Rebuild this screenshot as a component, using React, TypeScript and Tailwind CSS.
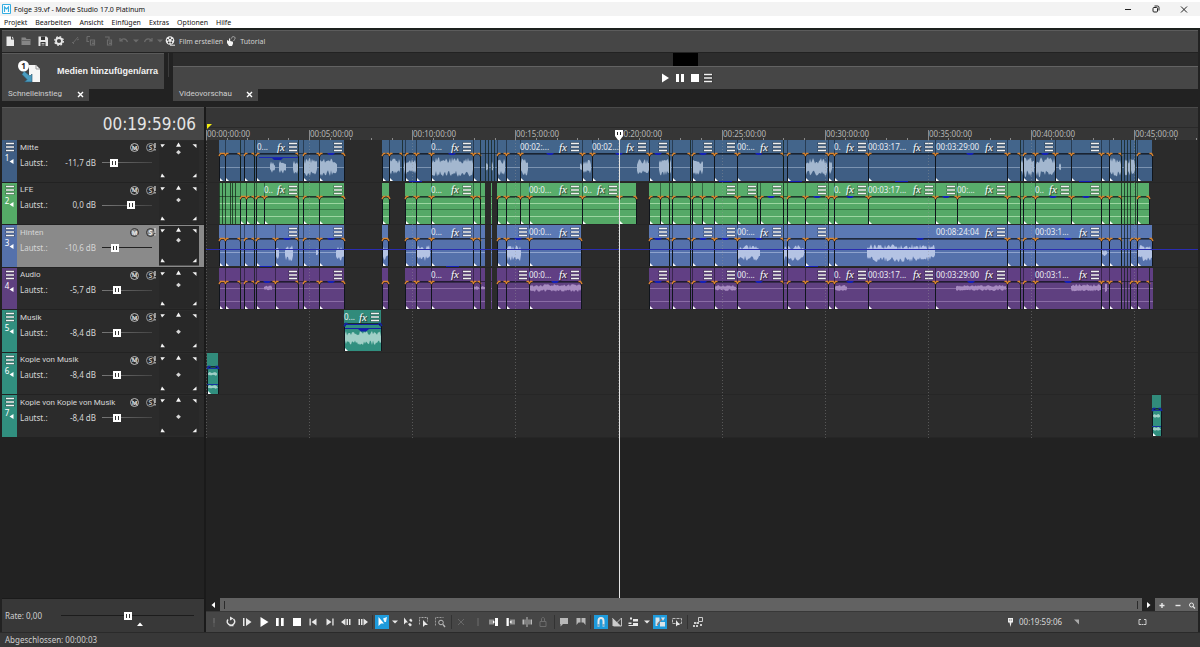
import React from "react";

/* Canvas x positions are counted from the window's left edge; lanes begin here. */
const ORIGIN = 206;
const FIVE_MINUTES = 103.1;

type Label = { t?: string; x?: number; fx?: number; m: number };
type Wave = [from: number, to: number, amp: number];
type Track = {
  name: string;
  vol: string;
  pos: number;
  pan: number;
  head: string;
  body: string;
  wave: string;
  strip: string;
  selected?: boolean;
  clips: number[][];
  labels: Label[];
  waves: Wave[];
  centre: number;
  lines: number[];
  top: number[];
  bottom: number[];
};

const m = (v: number): Label => ({ m: v });
const l = (t: string, x: number, fx: number, mm: number): Label => ({ t, x, fx, m: mm });

const tracks: Track[] = [
  {
    name: "Mitte", vol: "-11,7 dB", pos: 20, pan: 12,
    head: "#43658b", body: "#3f5e84", wave: "#a3b7cf", strip: "bg-[#3f5e84]",
    clips: [
      [219, 225, 240, 244, 254, 256, 298, 303, 319, 344],
      [382, 389, 402, 405, 416, 431, 473, 480, 485, 488, 491, 494, 497, 506, 520, 582, 592, 649, 669, 672, 690, 692, 714, 737, 783, 787, 805, 828, 834, 868, 935, 1007, 1020, 1023, 1035, 1055, 1071, 1101, 1109, 1121, 1124, 1127, 1130, 1135, 1137, 1152],
    ],
    labels: [
      l("0...", 257, 281, 293), m(338), l("0...", 431, 455, 467), l("00:02:...", 520, 563, 575), l("00:02...", 592, 630, 642),
      m(663), m(708), m(731), l("00:...", 737, 764, 777), m(822), l("0.", 834, 850, 862), l("00:03:17...", 868, 917, 929),
      l("00:03:29:00", 936, 989, 1001), m(1049), m(1095),
    ],
    waves: [[270, 275, 6], [279, 286, 7], [293, 298, 7], [303, 317, 9], [319, 337, 9], [389, 400, 9], [404, 416, 8], [431, 473, 10], [486, 488, 6], [491, 493, 6], [497, 505, 9], [520, 528, 9], [580, 582, 5], [583, 591, 8], [637, 649, 8], [659, 671, 9], [692, 703, 8], [805, 827, 9], [828, 832, 7], [1020, 1034, 10], [1036, 1055, 10], [1059, 1061, 6], [1109, 1121, 10], [1124, 1135, 9]],
    centre: 27, lines: [27], top: [331, 452, 550, 619, 658, 703, 759, 970, 1045], bottom: [415, 725, 795, 901, 1085],
  },
  {
    name: "LFE", vol: "0,0 dB", pos: 60, pan: 17,
    head: "#58ad6b", body: "#55a967", wave: "#9bd6a0", strip: "bg-[#55ab67]",
    clips: [
      [219, 222, 225, 230, 232, 235, 240, 246, 254, 256, 264, 298, 303, 319, 344], [382, 389],
      [405, 416, 431, 473, 480, 485], [491, 492], [497, 506, 520, 529, 582, 619, 636],
      [649, 660, 669, 672, 690, 692, 702, 714, 737, 757, 760, 783, 787, 805, 828, 834, 868, 935, 957, 1007, 1020, 1023, 1035, 1071, 1101, 1109, 1121, 1124, 1127, 1130, 1135, 1137, 1149],
    ],
    labels: [
      l("0..", 264, 281, 293), m(338), l("0...", 431, 455, 467), l("00:0...", 529, 563, 575), l("0..", 583, 601, 613), m(731), m(752), m(777), m(822),
      l("0.", 834, 850, 862), l("00:03:17...", 868, 917, 929), m(951), l("00:...", 957, 989, 1001), l("0..", 1035, 1053, 1065), m(1095),
    ],
    waves: [], centre: 20, lines: [20, 33], top: [771, 817, 850, 946, 1053, 1086], bottom: [281, 452, 600, 725],
  },
  {
    name: "Hinten", vol: "-10,6 dB", pos: 22, pan: 15,
    head: "#5b79b5", body: "#5571ab", wave: "#b4c3e4", strip: "bg-[#5571ab]", selected: true,
    clips: [
      [219, 225, 240, 244, 254, 256, 275, 298, 303, 319, 344], [382, 388], [405, 416, 431, 473, 480, 485], [491, 492], [497, 506, 529, 581],
      [649, 669, 672, 690, 692, 714, 737, 783, 787, 805, 828, 834, 1007, 1020, 1023, 1035, 1101, 1109, 1121, 1124, 1127, 1130, 1137, 1152],
    ],
    labels: [
      m(293), m(338), l("0...", 431, 455, 467), m(523), l("00:0...", 529, 563, 575), m(663), m(708), m(731), l("00:...", 737, 764, 777), m(822),
      l("00:08:24:04", 936, 989, 1001), l("00:03:1...", 1035, 1083, 1095),
    ],
    waves: [[275, 279, 6], [285, 293, 8], [316, 318, 5], [336, 344, 8], [382, 388, 7], [417, 430, 8], [507, 521, 8], [737, 760, 8], [783, 804, 8], [867, 935, 9], [1101, 1107, 3], [1138, 1152, 8]],
    centre: 28, lines: [27], top: [287, 331, 518, 658, 703, 725, 759, 920, 1068], bottom: [265, 452, 811],
  },
  {
    name: "Audio", vol: "-5,7 dB", pos: 27, pan: 17,
    head: "#613f84", body: "#5f4080", wave: "#a78bc0", strip: "bg-[#5f4080]",
    clips: [
      [219, 225, 240, 244, 254, 256, 275, 298, 303, 319, 344], [382, 388], [405, 416, 431, 473, 480, 485], [491, 492], [497, 506, 529, 581],
      [649, 669, 672, 690, 692, 714, 737, 783, 787, 805, 828, 834, 868, 935, 1007, 1020, 1023, 1035, 1101, 1109, 1121, 1124, 1127, 1130, 1137, 1149, 1153],
    ],
    labels: [
      m(293), m(338), l("0...", 431, 455, 467), m(523), l("00:0...", 529, 563, 575), m(663), m(708), m(731), l("00:...", 737, 764, 777), m(822),
      l("0.", 834, 850, 862), l("00:03:17...", 868, 917, 929), l("00:03:29:00", 936, 989, 1001), l("00:03:1...", 1035, 1083, 1095),
    ],
    waves: [[264, 272, 3], [473, 479, 2], [481, 485, 2], [529, 581, 4], [714, 736, 3], [835, 847, 3], [956, 1006, 3], [1071, 1101, 4], [1105, 1107, 7]],
    centre: 20, lines: [20, 33], top: [267, 331, 555, 658, 703, 759, 850, 971, 1068], bottom: [287, 452, 518, 795, 817, 901, 1014],
  },
  {
    name: "Musik", vol: "-8,4 dB", pos: 25, pan: 22,
    head: "#318b7b", body: "#318f7f", wave: "#a0cfc6", strip: "bg-[#318f7f]",
    clips: [[344, 381]], labels: [l("0...", 344, 363, 375)], waves: [[345, 381, 7]],
    centre: 28, lines: [], top: [], bottom: [],
  },
  {
    name: "Kopie von Musik", vol: "-8,4 dB", pos: 25, pan: 22,
    head: "#318b7b", body: "#318f7f", wave: "#a0cfc6", strip: "bg-[#318f7f]",
    clips: [[207, 218]], labels: [], waves: [[208, 217, 2]],
    centre: 21, lines: [34], top: [], bottom: [],
  },
  {
    name: "Kopie von Kopie von Musik", vol: "-8,4 dB", pos: 25, pan: 22,
    head: "#318b7b", body: "#318f7f", wave: "#a0cfc6", strip: "bg-[#318f7f]",
    clips: [[1152, 1161]], labels: [], waves: [[1153, 1160, 2]],
    centre: 21, lines: [34], top: [], bottom: [],
  },
];

const noise = (n: number) => {
  const s = Math.sin(n * 127.1 + 11.7) * 43758.5453;
  return s - Math.floor(s);
};

function wavePath([from, to, amp]: Wave, centre: number) {
  const up: string[] = [];
  const down: string[] = [];
  for (let x = from; x <= to; x += 1) {
    const edge = x === from || x === to ? 0.6 : 1;
    up.push(`${x},${(centre - amp * edge * (0.35 + 0.65 * noise(x))).toFixed(1)}`);
    down.unshift(`${x},${(centre + amp * edge * (0.35 + 0.65 * noise(x + 0.5))).toFixed(1)}`);
  }
  return up.concat(down).join(" ");
}

function LaneDrawing({ track, index }: { track: Track; index: number }) {
  const teal = index > 3;
  return (
    <svg className="absolute inset-0 h-full w-full" aria-hidden="true">
      <g transform={`translate(${-ORIGIN} 0)`}>
        {track.clips.map((cuts) => {
          const a = cuts[0];
          const z = cuts[cuts.length - 1];
          return (
            <g key={a}>
              <rect x={a} y="0" width={z - a} height="41" fill={track.body} />
              <rect x={a} y="0" width={z - a} height="13" fill={track.head} />
              <rect x={a} y="13" width={z - a} height="1" fill="#000" opacity=".45" />
              {track.lines.map((y) => (
                <rect key={y} x={a} y={y} width={z - a} height="1" fill={track.wave} opacity={index === 1 ? 1 : 0.6} />
              ))}
              {index === 1 && <rect x={a} y="26" width={z - a} height="1" fill="#3a7d49" />}
            </g>
          );
        })}
        {index === 0 && <path d="M259 17.500H298" stroke="#1b28b4" />}
        {index === 0 && <path d="M272 18h11l-2 2h-7z" fill="#1420a8" />}
        {track.waves.map((w) => (
          <polygon key={w[0]} points={wavePath(w, track.centre)} fill={track.wave} />
        ))}
        {index > 4 && track.waves.map((w) => (
          <polygon key={w[0]} points={wavePath(w, 34)} fill={track.wave} />
        ))}
        {track.clips.map((cuts) =>
          cuts.slice(0, -1).map((a, i) => {
            const b = cuts[i + 1];
            if (b - a < 6)
              return <rect key={a} x={a} y="0" width={b - a < 2 ? 0 : 1} height="41" fill="#101c14" opacity=".7" />;
            return (
              <g key={a}>
                {i > 0 && <rect x={a} y="0" width="1" height="14" fill="#000" opacity=".4" />}
                <path d={`M${a + 0.5} 41V17Q${a + 0.5} 14 ${a + 4} 14H${b - 3}Q${b + 0.5} 14 ${b + 0.5} 17V41`} fill="none" stroke="#10151c" strokeWidth="1" />
                <path d={`M${a} 16l1.500-2.500h2M${b + 1} 16l-1.500-2.500h-2`} fill="none" stroke={teal ? "#1420a8" : "#dd852c"} strokeWidth="1.400" />
                <path d={`M${a + 1} 38v3h3z`} fill="#fff" />
              </g>
            );
          }),
        )}
        {track.top.map((x) => <path key={x} d={`M${x - 4} 13h8l-2 2h-4z`} fill="#1420b8" />)}
        {track.bottom.map((x) => <rect key={x} x={x - 6} y="41" width="13" height="1" fill="#1420b8" />)}
        {index === 4 && <path d="M344.500 16.500l2-2h32l2 2M345 18.500h36" fill="none" stroke="#1420a8" />}
        {index === 4 && <path d="M358 19h11l-3 2.500h-5z" fill="#1420a8" />}
        {index > 4 && track.clips.map(([a, b]) => <path key={a} d={`M${a} 15.500H${b}M${a} 31.500H${b}`} stroke="#1633a0" />)}
      </g>
      {index === 2 && <rect x="0" y="24" width="100%" height="1" fill="#2a2cb0" />}
    </svg>
  );
}

function Bars() {
  return (
    <svg width="10" height="10" viewBox="0 0 10 10" aria-hidden="true">
      <path d="M.5 1.500h9M.5 5h9M.5 8.500h9" stroke="#1a1a1a" strokeWidth="2.600" opacity=".5" />
      <path d="M1 1.500h8M1 5h8M1 8.500h8" stroke="#f2f2f2" strokeWidth="1.400" />
    </svg>
  );
}

function Lane({ track, index }: { track: Track; index: number }) {
  return (
    <div className="relative border-b border-[#262626]">
      <LaneDrawing track={track} index={index} />
      {track.labels.map((b) => (
        <React.Fragment key={b.m}>
          {b.t && (
            <span className="absolute top-0 flex h-3.5 items-center whitespace-nowrap text-[8px] text-[#e9edf2]" style={{ left: b.x! - ORIGIN }}>
              {b.t}
            </span>
          )}
          {b.fx && (
            <button aria-label="Ereignis-FX" className="absolute top-0 flex h-3.5 w-3 items-center justify-center font-['Liberation_Serif',serif] text-[11px] italic leading-none text-white [text-shadow:1px_1px_1px_#222]" style={{ left: b.fx - ORIGIN - 6 }}>
              fx
            </button>
          )}
          <button aria-label="Ereignismenü" className="absolute top-0 flex h-3.5 items-center" style={{ left: b.m - ORIGIN - 5 }}>
            <Bars />
          </button>
        </React.Fragment>
      ))}
    </div>
  );
}

const rangeBase =
  "h-3 appearance-none bg-transparent outline-none [&::-webkit-slider-thumb]:h-2 [&::-webkit-slider-thumb]:w-2 [&::-webkit-slider-thumb]:appearance-none [&::-webkit-slider-thumb]:bg-[linear-gradient(90deg,#fff_2px,#333_2px,#333_3px,#fff_3px,#fff_5px,#333_5px,#333_6px,#fff_6px)] [&::-webkit-slider-thumb]:border-y-2 [&::-webkit-slider-thumb]:border-white";

function Panner({ y }: { y: number }) {
  return (
    <svg className="h-full w-full" viewBox="0 0 40 42" preserveAspectRatio="none" aria-hidden="true">
      <rect width="40" height="42" fill="#282828" />
      <g fill="#f4f4f4">
        <path d="M1.500 3.500h4.500l-3 3.500zM33.500 3.500h4V7.500zM17 6l2.500-4.500 2.500 4.500zM1.500 38.500l1.500-4 3 4zM37.500 38.500v-4l-4 4z" />
        <path d={`M19.500 ${y - 2.4}l2.400 2.400-2.400 2.400-2.400-2.400z`} opacity=".85" />
      </g>
    </svg>
  );
}

function TrackHeader({ track, index }: { track: Track; index: number }) {
  const id = `vol-${index}`;
  return (
    <div className={`flex border-b border-[#222] text-[8px] ${track.selected ? "bg-[#8a8a8a]" : "bg-[#2b2b2b]"}`}>
      <div className={`flex w-[15px] flex-col items-center pt-0.5 ${track.strip}`}>
        <button aria-label={`Spurmenü ${track.name}`}><Bars /></button>
        <span className="mt-0.5 flex items-start leading-none text-white">
          {index + 1}
          <svg className="mt-1" width="5" height="7" viewBox="0 0 5 7" aria-hidden="true"><path d="M4.500 1v5L.5 3.500z" fill="#fff" /></svg>
        </span>
      </div>
      <div className="min-w-0 flex-1 pl-[3px] text-[#d6d6d6]">
        <div className="flex h-[15px] items-center pr-1">
          <span className="flex-1 whitespace-nowrap font-['Roboto',sans-serif]">{track.name}</span>
          <button aria-label="Stumm" className={`relative mr-[7px] flex h-[9px] w-[9px] items-center justify-center rounded-full border text-[6px] font-bold leading-none ${track.selected ? "border-[#333] text-[#eee]" : "border-[#bbb] text-[#ddd]"}`}>
            M
            <svg className="absolute -inset-px" viewBox="0 0 9 9" aria-hidden="true"><path d="M1.500 2l6 5.500" stroke="#ccc" strokeWidth=".9" /></svg>
          </button>
          <button aria-label="Solo" className={`relative flex h-[9px] w-[9px] items-center justify-center rounded-full border text-[7px] font-bold leading-none ${track.selected ? "border-[#333] text-[#eee]" : "border-[#999] text-[#bbb]"}`}>
            S
            <svg className="absolute -right-0.5 -top-px" width="2" height="9" viewBox="0 0 2 9" aria-hidden="true"><path d="M1 0v5M1 6v1.500" stroke="#ddd" strokeWidth="1.200" /></svg>
          </button>
        </div>
        <div className="flex h-[15px] items-center">
          <label htmlFor={id} className="w-9">Lautst.:</label>
          <span className="w-10 text-right">{track.vol}</span>
          <input
            id={id}
            type="range"
            defaultValue={track.pos}
            className={`ml-1.5 w-[50px] ${rangeBase} ${track.selected ? "bg-[linear-gradient(#222,#222)]" : "bg-[linear-gradient(90deg,#777,#444)]"} bg-[length:100%_1px] bg-center bg-no-repeat`}
          />
        </div>
      </div>
      <div className="my-px mr-[5px] w-10"><Panner y={track.pan} /></div>
    </div>
  );
}

type IconProps = { children: React.ReactNode; label: string; dim?: boolean; active?: boolean; narrow?: boolean };
function Tool({ children, label, dim, active, narrow }: IconProps) {
  return (
    <button
      aria-label={label}
      className={`flex h-3.5 shrink-0 items-center justify-center ${narrow ? "w-2" : "w-3.5"} ${active ? "bg-[#1e9bdc]" : ""} ${dim ? "text-[#6c6c6c]" : "text-[#e8e8e8]"}`}
    >
      <svg width={narrow ? 8 : 12} height="12" viewBox={narrow ? "2 0 8 12" : "0 0 12 12"} fill="currentColor" aria-hidden="true">
        {children}
      </svg>
    </button>
  );
}

const S = ({ d, w = 1.2 }: { d: string; w?: number }) => <path d={d} fill="none" stroke="currentColor" strokeWidth={w} />;
const Caret = () => <path d="M3 4.500h6L6 7.500z" />;
const Sep = () => <span className="h-3.5 w-px shrink-0 bg-[#333]" />;

function MainToolbar() {
  return (
    <div className="flex h-[22px] items-center border-t border-[#5c5c5c] bg-[#464646] pb-px text-[7px] text-[#d2d2d2]">
      <div className="ml-px flex w-32 items-center justify-between">
        <Tool label="Neu"><path d="M2.500 1.500h4.500v3h3v6.500h-7.500zM8 1.500l2 2h-2z" /></Tool>
        <Tool label="Öffnen"><path d="M1.500 2.500h4l1 1.500h4v6h-9z" fill="#858585" /><path d="M1.500 5.500h9" stroke="#666" /></Tool>
        <Tool label="Speichern"><path d="M1.500 1.500h8l1.500 1.500v8h-9.500z" /><path d="M4 1.500h4v3.500h-4zM3.500 7h5v4h-5z" fill="#333" /><path d="M4.500 8.500h3M4.500 10h3" stroke="#eee" strokeWidth=".7" /></Tool>
        <Tool label="Eigenschaften"><circle cx="6" cy="6" r="3" fill="none" stroke="currentColor" strokeWidth="1.800" /><circle cx="6" cy="6" r="4.300" fill="none" stroke="currentColor" strokeWidth="1.300" strokeDasharray="1.700 1.680" /></Tool>
        <Tool label="Ausschneiden" dim><S d="M9 2L4 8M3 7l2 2M8 5l2-1" w={0.9} /></Tool>
        <Tool label="Kopieren" dim><S d="M2 1.500v5h2M2 1.500h3M5.500 5h4v5h-4zM7 7h2M7 8.500h2" /></Tool>
        <Tool label="Einfügen" dim><S d="M3 2h4v2M5.500 5h4v5h-4zM7 7h2M7 8.500h2" /></Tool>
        <Tool label="Rückgängig" dim><S d="M2 3v3h3M2.500 6C4 3 8 3 9.500 7" /></Tool>
      </div>
      <div className="ml-px flex items-center gap-px">
        <Tool label="Rückgängig-Liste" narrow dim><Caret /></Tool>
        <Tool label="Wiederherstellen" dim><S d="M10 3v3H7M9.500 6C8 3 4 3 2.500 7" /></Tool>
        <Tool label="Wiederherstellen-Liste" narrow dim><Caret /></Tool>
      </div>
      <button className="flex items-center gap-[3px]">
        <svg width="12" height="12" viewBox="0 0 12 12" aria-hidden="true">
          <circle cx="6" cy="5.500" r="4.300" fill="#ececec" />
          <g fill="#333"><circle cx="6" cy="3.200" r=".9" /><circle cx="3.800" cy="4.800" r=".9" /><circle cx="8.200" cy="4.800" r=".9" /><circle cx="4.700" cy="7.500" r=".9" /><circle cx="7.300" cy="7.500" r=".9" /></g>
          <path d="M6 10.200h5" stroke="#ececec" />
        </svg>
        Film erstellen
      </button>
      <button className="ml-0.5 flex items-center gap-[3px]">
        <svg width="12" height="12" viewBox="0 0 12 12" aria-hidden="true">
          <path d="M2 5l2 1V3.500h1.200V6l2.800.8v2L7 11H4L2 8z" fill="#f2f2f2" />
          <path d="M6.500 3.500C6.500 1 10.500 1 10 3.500 9.800 4.800 8.800 4.500 8.800 6" fill="none" stroke="#aaa" />
        </svg>
        Tutorial
      </button>
    </div>
  );
}

function Tab({ children, width }: { children: string; width: string }) {
  return (
    <div className={`flex h-3 items-center justify-between bg-[#464646] pb-0.5 pl-1.5 pr-1 font-['Roboto',sans-serif] text-[8px] text-[#cfcfcf] ${width}`}>
      {children}
      <button aria-label={`${children} schließen`} className="flex h-2.5 w-2.5 items-center justify-center text-white">
        <svg width="7" height="7" viewBox="0 0 7 7" aria-hidden="true"><path d="M1 1l5 5M6 1L1 6" stroke="currentColor" strokeWidth="1.400" /></svg>
      </button>
    </div>
  );
}

function UpperDock() {
  return (
    <div className="flex h-[54px] shrink-0 bg-[#222] pl-0.5 pr-0.5">
      <section className="w-[162px]">
        <button className="flex h-9 w-full items-center overflow-hidden border-t border-[#5a5a5a] bg-[#464646] pl-3.5 text-left">
          <svg className="shrink-0" width="26" height="26" viewBox="0 0 26 26" aria-hidden="true">
            <path d="M13 6h7l4 4v13H13z" fill="#f6f6f6" />
            <path d="M20 6v4h4" fill="none" stroke="#999" />
            <path d="M8 12l6 5 2-2v8H8.500l2.500-2.500-5-5z" fill="#4a9cc0" stroke="#28566c" strokeWidth=".6" />
            <circle cx="7.500" cy="7" r="5.500" fill="#fff" />
            <text x="7.500" y="10" textAnchor="middle" fontSize="8" fontWeight="bold" fill="#222">1</text>
          </svg>
          <span className="ml-[15px] whitespace-nowrap font-['Liberation_Sans',sans-serif] text-[9px] font-bold text-[#f2f2f2]">Medien hinzufügen/arra</span>
        </button>
        <Tab width="w-[87px]">Schnelleinstieg</Tab>
      </section>
      <div className="flex w-[9px] justify-center"><span className="h-6 w-px bg-[#3c3c3c]" /></div>
      <section className="min-w-0 flex-1">
        <div className="flex h-[13px] justify-center bg-[#2c2c2c]"><span className="h-[13px] w-[25px] bg-black" /></div>
        <div className="flex h-[23px] items-center justify-center gap-px border-t border-[#626262] bg-[#464646]">
          <Tool label="Wiedergabe"><path d="M3 1.500v9l7-4.500z" fill="#fff" /></Tool>
          <Tool label="Pause"><path d="M2 2h3v8H2zM7 2h3v8H7z" fill="#fff" /></Tool>
          <Tool label="Stopp"><path d="M2 2h8v8H2z" fill="#fff" /></Tool>
          <button aria-label="Menü"><Bars /></button>
        </div>
        <Tab width="w-[85px]">Videovorschau</Tab>
      </section>
    </div>
  );
}

function Ruler() {
  const minutes = Array.from({ length: 49 }, (_, i) => i);
  return (
    <div className="relative h-[33px] overflow-hidden border-t border-[#4a4a4a] bg-[#363636]">
      <svg className="absolute inset-0 h-full w-full" aria-hidden="true">
        <path d="M0 19.500H992" stroke="#2a2a2a" />
        <path d="M1 16h5l-5 5z" fill="#f5ee10" />
        {minutes.map((i) => {
          const x = Math.round((i * FIVE_MINUTES) / 5) + 0.5;
          return <path key={i} d={`M${x} ${i % 5 === 0 ? 22 : 30}V33`} stroke="#8a8a8a" />;
        })}
      </svg>
      {Array.from({ length: 10 }, (_, i) => (
        <span key={i} className="absolute top-5 text-[8px] leading-3 text-[#b5b5b5]" style={{ left: Math.round(i * FIVE_MINUTES) + 1 }}>
          {`00:${String(i * 5).padStart(2, "0")}:00:00`}
        </span>
      ))}
    </div>
  );
}

function Timeline() {
  return (
    <main className="flex min-h-0 flex-1 bg-[#222] px-0.5">
      <div className="flex w-[202px] shrink-0 flex-col">
        <div className="flex h-[33px] shrink-0 items-center justify-end border-t border-[#565656] bg-[#464646] pr-2 font-['DejaVu_Sans_Condensed','DejaVu_Sans',sans-serif] text-[17px] leading-none text-[#e4e4e4]">00:19:59:06</div>
        <div className="grid h-[298px] grid-rows-7">
          {tracks.map((t, i) => <TrackHeader key={t.name} track={t} index={i} />)}
        </div>
        <div className="flex-1" />
        <div className="flex h-[34px] items-center border-t border-[#1a1a1a] bg-[#383838] pl-[3px] text-[8px] text-[#d0d0d0]">
          <label htmlFor="rate" className="w-14">Rate: 0,00</label>
          <div className="relative flex">
            <input id="rate" type="range" defaultValue="50" className={`w-[133px] ${rangeBase} bg-[linear-gradient(#1c1c1c,#1c1c1c)] bg-[length:100%_1px] bg-center bg-no-repeat`} />
            <svg className="absolute left-[76px] top-3" width="6" height="4" viewBox="0 0 6 4" aria-hidden="true"><path d="M0 4l3-3.500L6 4z" fill="#fff" /></svg>
          </div>
        </div>
      </div>
      <div className="w-0.5 shrink-0 bg-[#1a1a1a]" />
      <div className="flex min-w-0 flex-1 flex-col">
        <div className="relative min-h-0 flex-1 overflow-hidden">
          <Ruler />
          <div className="relative grid h-[298px] grid-rows-7 bg-[#2b2b2b]">
            {tracks.map((t, i) => <Lane key={t.name} track={t} index={i} />)}
            <svg className="pointer-events-none absolute inset-0 h-full w-full" aria-hidden="true">
              {Array.from({ length: 10 }, (_, i) => {
                const x = Math.round(i * FIVE_MINUTES) + 0.5;
                return <path key={i} d={`M${x} 0V298`} stroke="#9a9a9a" strokeDasharray="1 2" opacity=".4" />;
              })}
            </svg>
          </div>
          <div className="absolute bottom-0 left-[409px] top-[23px] flex w-2 flex-col items-center">
            <svg className="shrink-0" width="8" height="10" viewBox="0 0 8 10" aria-hidden="true">
              <path d="M0 0h8v6L5 10H3L0 6z" fill="#fff" />
              <path d="M2.500 2v3M5.500 2v3" stroke="#222" />
            </svg>
            <span className="w-px flex-1 bg-[#e4e4e4]" />
          </div>
        </div>
        <ScrollBar />
        <Transport />
      </div>
    </main>
  );
}

function ScrollBar() {
  return (
    <div className="flex h-[13px] shrink-0 items-center bg-[#626262]">
      <button aria-label="Nach links" className="flex h-full w-3.5 items-center justify-center bg-[#222]">
        <svg width="5" height="6" viewBox="0 0 5 6" aria-hidden="true"><path d="M4 0v6L.5 3z" fill="#fff" /></svg>
      </button>
      <span className="ml-1 h-2 w-px bg-[#2b2b2b]" />
      <span className="flex-1" />
      <span className="mr-1 h-2 w-px bg-[#2b2b2b]" />
      <button aria-label="Nach rechts" className="flex h-full w-[13px] items-center justify-center bg-[#222]">
        <svg width="5" height="6" viewBox="0 0 5 6" aria-hidden="true"><path d="M1 0v6l3.500-3z" fill="#fff" /></svg>
      </button>
      <div className="flex w-[43px] items-center pl-[3px]">
        <Tool label="Vergrößern" narrow><S d="M6 4v5M3.500 6.500h5" w={1.4} /></Tool>
        <span className="w-2" />
        <Tool label="Verkleinern" narrow><S d="M3.500 6.500h5" w={1.4} /></Tool>
        <span className="w-1.5" />
        <Tool label="Zoomwerkzeug" narrow><circle cx="5.500" cy="6" r="2" fill="none" stroke="currentColor" /><S d="M7 7.500l2 2" /></Tool>
      </div>
    </div>
  );
}

function Transport() {
  return (
    <div className="flex h-[21px] shrink-0 items-center border-t border-[#383838] bg-[#464646] pl-px text-[8px]">
      <div className="flex w-[163px] items-center justify-between">
        <Tool label="Aufnahme" dim><path d="M5 2h2v5H5z" opacity=".6" /><path d="M6 7v4" stroke="currentColor" opacity=".6" /></Tool>
        <Tool label="Schleife"><S d="M3 3.500A3.600 3.600 0 1 0 8.500 3M4.500 9.500h4" w={1.4} /><path d="M5 .5v4l3.500-2z" /></Tool>
        <Tool label="Von Anfang"><path d="M2 2h1.500v8H2zM5 2v8l5.500-4z" /></Tool>
        <Tool label="Wiedergabe"><path d="M2.500 1v10l8-5z" fill="#fff" /></Tool>
        <Tool label="Pause"><path d="M2 2h2.700v8H2zM7 2h2.700v8H7z" fill="#fff" /></Tool>
        <Tool label="Stopp"><path d="M2 2h8v8H2z" fill="#fff" /></Tool>
        <Tool label="Zum Anfang"><path d="M2.500 2.500h1.300v7H2.500zM9.500 2.500v7L4.500 6z" /></Tool>
        <Tool label="Zum Ende"><path d="M8.300 2.500h1.300v7H8.300zM2.500 2.500v7l5-3.500z" /></Tool>
        <Tool label="Bild zurück"><path d="M5.500 2.500v7L1 6zM6.500 3H8v6H6.500zM9 3h1.500v6H9z" /></Tool>
        <Tool label="Bild vor"><path d="M6.500 2.500v7L11 6zM4 3h1.500v6H4zM1.500 3H3v6H1.500z" /></Tool>
      </div>
      <div className="ml-0.5 flex w-[75px] items-center justify-between">
        <Sep />
        <Tool label="Bearbeitungswerkzeug" active><path d="M2.500 1v9l2.500-2.500h3z" fill="#fff" /><path d="M7 2.500l4-1.500-1 5H8.500z" fill="#e8f7ff" /></Tool>
        <Tool label="Werkzeugliste" narrow><Caret /></Tool>
        <Tool label="Hüllkurve"><path d="M2 1.500v7l2-2h2zM7 4l2-1.500L10.500 5 9 6zM6 8l2-1 2 2-2 1.500z" /></Tool>
        <Tool label="Auswahl"><path d="M5 4v7l2-2h3z" /><path d="M1.500 8.500v-7h8v4" fill="none" stroke="#aaa" strokeDasharray="2 1" /></Tool>
        <Tool label="Zoom"><circle cx="7" cy="6.500" r="2.300" fill="none" stroke="#bbb" /><path d="M9 8.500l2 2.500" stroke="#bbb" strokeWidth="1.300" /><path d="M1.500 9.500v-8h8" fill="none" stroke="#999" strokeDasharray="2 1" /></Tool>
      </div>
      <div className="ml-1 flex w-[99px] items-center justify-between">
        <Sep />
        <Tool label="Löschen" dim><S d="M3 3l6 6M9 3L3 9" w={0.9} /></Tool>
        <Tool label="Trimmen" dim><S d="M6 2v8" w={1} /></Tool>
        <Tool label="Start trimmen"><path d="M1 3.500h5v5H1z" fill="#909090" /><path d="M7 2h3v8H7zM5 4.500L7 6 5 7.500z" fill="#fff" /></Tool>
        <Tool label="Ende trimmen"><path d="M6 3.500h5v5H6z" fill="#909090" /><path d="M2.500 2h2.300v8H2.500zM7.500 4.500v3L5.500 6z" fill="#fff" /></Tool>
        <Tool label="Teilen"><path d="M5.500 1h1v10h-1zM1.500 3.500H3v5H1.500zM3.500 3.500h1v5h-1zM7.500 3.500h1v5h-1zM9.500 3.500h1.500v5H9.500z" fill="#bbb" /></Tool>
        <Tool label="Sperren" dim><path d="M3 5.500h6v5H3z" fill="none" stroke="currentColor" /><path d="M4.500 5.500V3c0-2 3-2 3 0v2.500" fill="none" stroke="currentColor" /></Tool>
      </div>
      <div className="ml-1 flex w-[113px] items-center justify-between">
        <Sep />
        <Tool label="Marker"><path d="M2 2h8v6H5L2.500 10.500V8H2z" fill="#b8b8b8" /></Tool>
        <Tool label="Region"><path d="M1.500 2h4v4.500h-2L1.500 9zM6.500 2h4v7l-2-2.500h-2z" fill="#b8b8b8" /></Tool>
        <Sep />
        <Tool label="Einrasten" active><S d="M3.500 10.500V5c0-4 5-4 5 0v5.500" w={2} /><path d="M2.500 9h2M7.500 9h2" stroke="#176fa0" /></Tool>
        <Tool label="Überblendungen"><path d="M1.500 2v8h8z" fill="#ccc" /><path d="M1.500 2.500l8 7.500M10.500 2L3 9.500M10.500 2v8h-8" fill="none" stroke="#ccc" strokeWidth=".9" /></Tool>
        <Tool label="Ripple"><path d="M3 1.500h2v2H3zM6 3h5v2.500H6zM1.500 6.500h3V8h-3zM6 7h5v3H1.500V9H6z" /></Tool>
        <Tool label="Ripple-Liste" narrow><Caret /></Tool>
        <Tool label="Hüllkurven sperren" active><path d="M1.500 1.500h4v3.500l-2 2v3h-2zM7 1.500h4L9 5zM6 6h5v4.500H6z" fill="#d8e4ea" /><path d="M3 9l5-6" stroke="#c56b4b" /></Tool>
      </div>
      <div className="ml-[3px] flex w-[35px] items-center justify-between">
        <Tool label="Gruppierung"><path d="M1.500 2.500h9v5h-9z" fill="none" stroke="#bbb" strokeDasharray="3 1" /><path d="M5 4v6.500L6.800 9H9z" /></Tool>
        <Sep />
        <Tool label="Automatisierung"><path d="M6.500 1.500h4v4h-4z" fill="none" stroke="#ccc" /><path d="M2 6h2.500v2H2zM5 6h2v2H5zM1 9h2v2H1zM4 9h2v2H4zM8 8h2v2H8z" fill="#ccc" /></Tool>
      </div>
      <span className="flex-1" />
      <div className="flex w-[191px] items-center text-[#d8d8d8]">
        <svg width="7" height="9" viewBox="0 0 7 9" aria-hidden="true"><path d="M1 0h5v4.500H4.500L3.500 9l-1-4.500H1z" fill="#eee" /><path d="M2.700 1.500v1M4.300 1.500v1" stroke="#555" /></svg>
        <span className="ml-[5px]">00:19:59:06</span>
        <svg className="ml-3" width="6" height="6" viewBox="0 0 6 6" aria-hidden="true"><path d="M0 .5h5v5z" fill="#aaa" /></svg>
        <svg className="ml-[58px]" width="9" height="8" viewBox="0 0 9 8" fill="none" stroke="#ccc" aria-hidden="true"><path d="M3 1.500H1v5h2M6 1.500h2v5H6M3.500 6.500h2" /></svg>
      </div>
    </div>
  );
}

const menus = ["Projekt", "Bearbeiten", "Ansicht", "Einfügen", "Extras", "Optionen", "Hilfe"];

export default function App() {
  return (
    <div className="flex h-screen min-h-[600px] flex-col overflow-hidden bg-[#222] font-['Noto_Sans',sans-serif] leading-none">
      <header className="shrink-0 bg-white pt-0.5">
        <div className="flex h-3.5 items-center bg-[#f3f3f3] pl-0.5 text-[7px] text-[#111]">
          <svg width="9" height="10" viewBox="0 0 9 10" aria-hidden="true"><path d="M.5.5h8v9h-8z" fill="#fff" stroke="#35aee2" /><path d="M2.500 8V3l2 2 2-2v5" fill="none" stroke="#35aee2" strokeWidth="1.200" /></svg>
          <h1 className="ml-[3px] flex-1">Folge 39.vf - Movie Studio 17.0 Platinum</h1>
          <div className="flex gap-[18px] pr-[11px]">
            <button aria-label="Minimieren"><svg width="10" height="10" viewBox="0 0 10 10" aria-hidden="true"><path d="M2 5.500h6" stroke="#222" /></svg></button>
            <button aria-label="Wiederherstellen"><svg width="10" height="10" viewBox="0 0 10 10" fill="none" stroke="#222" aria-hidden="true"><rect x="2" y="3.500" width="4.500" height="4.500" rx="1" /><path d="M3.500 2h3Q8 2 8 3.500v3" /></svg></button>
            <button aria-label="Schließen"><svg width="10" height="10" viewBox="0 0 10 10" aria-hidden="true"><path d="M2 2.500l6 6M8 2.500l-6 6" stroke="#222" /></svg></button>
          </div>
        </div>
        <nav className="flex h-3 items-center gap-2 pl-1 text-[7px] text-[#111]">
          {menus.map((t) => <button key={t}>{t}</button>)}
        </nav>
      </header>
      <div className="shrink-0 border-b border-t-2 border-b-[#222] border-t-[#1d211f] px-0.5"><MainToolbar /></div>
      <UpperDock />
      <Timeline />
      <footer className="flex h-[15px] shrink-0 items-center border-t border-[#2a2a2a] bg-[#383838] pl-[5px] text-[8px] text-[#cfcfcf]">Abgeschlossen: 00:00:03</footer>
    </div>
  );
}
